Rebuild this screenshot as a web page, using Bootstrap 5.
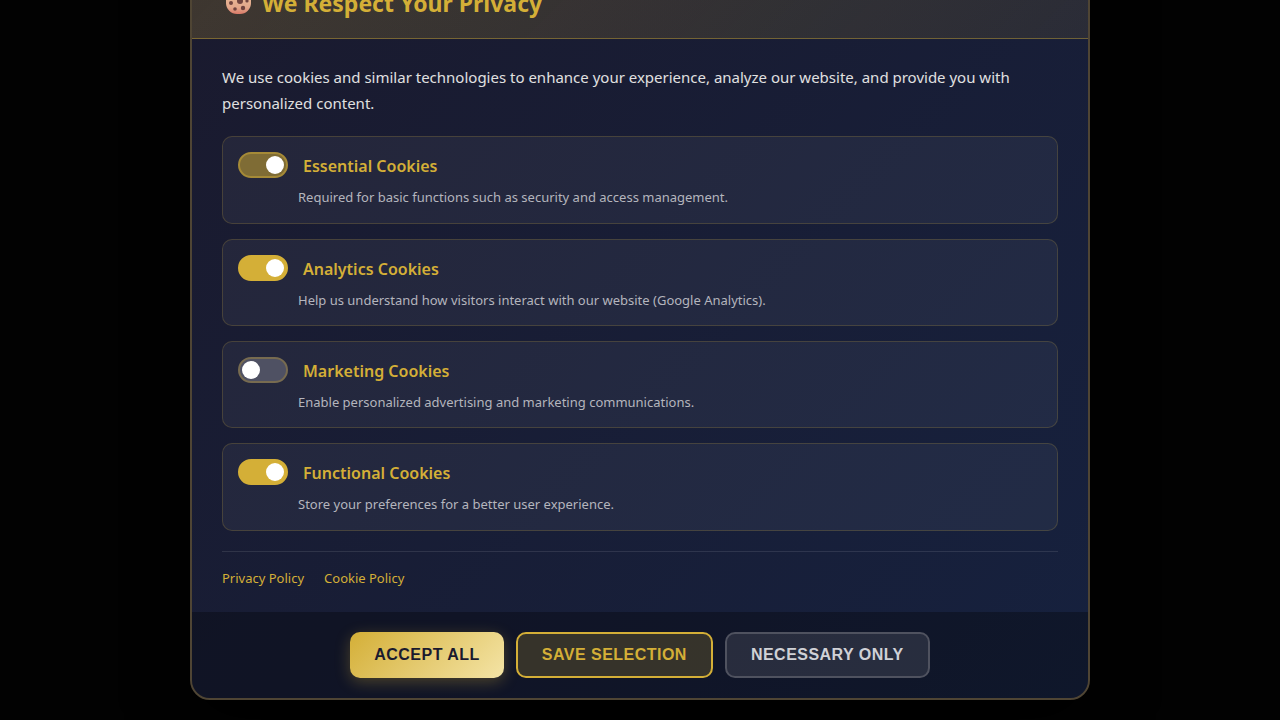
<!DOCTYPE html>
<html lang="en">
<head>
<meta charset="utf-8">
<meta name="viewport" content="width=device-width, initial-scale=1">
<title>Cookie consent</title>
<link href="https://cdn.jsdelivr.net/npm/bootstrap@5.3.0/dist/css/bootstrap.min.css" rel="stylesheet">
<style>
:root { --gold: #d4af37; --gold-rgb: 212,175,55; }
body { background: #020202; color: #e0e0e0; font-family: "Noto Sans", "Open Sans", sans-serif; font-size: 15px; }
.consent-overlay { height: 100vh; padding: 20px; }
.consent-panel { max-width: 900px; border: 2px solid #4f4534; border-radius: 20px;
  background: linear-gradient(135deg, #1a1a2e 0%, #16213e 100%);
  box-shadow: 0 20px 60px #000; }
.consent-head { padding: 25px 30px 21px; border-bottom: 1px solid rgba(var(--gold-rgb),.4);
  border-radius: 18px 18px 0 0;
  background: linear-gradient(135deg, rgba(var(--gold-rgb),.2), rgba(var(--gold-rgb),.1)); }
.consent-title { color: var(--gold); font-size: 23px; font-weight: 700; line-height: 28px; gap: 8px; }
.consent-body { padding: 25px 30px 23px; }
.consent-intro { line-height: 26px; margin-bottom: 20px; }
.consent-list { gap: 15px; }
.consent-item { padding: 15px 15px 14px; border: 1px solid rgba(var(--gold-rgb),.2); border-radius: 10px; background: rgba(255,255,255,.05); }
.consent-row { gap: 15px; padding: 0; }
.consent-row label { color: var(--gold); font-size: 16px; font-weight: 600; line-height: 24px; padding-top: 2px; }
.consent-row .form-check-input { width: 50px; height: 26px; margin: 0; position: relative;
  border: 2px solid #776b50; border-radius: 13px; background: #4f5163; }
.consent-row .form-check-input::after { content: ""; position: absolute; top: 2px; left: 2px; width: 18px; height: 18px; border-radius: 50%; background: #fff; }
.consent-row .form-check-input:checked { background: var(--gold); border-color: var(--gold); }
.consent-row .form-check-input:checked::after { left: auto; right: 2px; }
.consent-row .form-check-input:disabled { opacity: 1; background: #7f6c35; border-color: #a58a37; }
.consent-row .form-check-input:disabled ~ label { opacity: 1; }
.consent-note { color: #b4b5bd; font-size: 13px; line-height: 1.72; margin: 8px 0 0 60px; }
.consent-links { margin-top: 20px; padding-top: 15px; gap: 20px; border-top: 1px solid rgba(255,255,255,.1); font-size: 13px; line-height: 1.72; }
.consent-links a { color: var(--gold); text-decoration: none; }
.consent-foot { padding: 20px 30px; gap: 12px; background: rgba(0,0,0,.3); border-radius: 0 0 18px 18px; }
.consent-foot .btn { padding: 10px 24px; border-width: 2px; border-radius: 10px; font: 700 16px/22px "Liberation Sans", Arial, sans-serif; letter-spacing: .03em; text-transform: uppercase; }
.consent-foot .btn-accept { border: 0; padding: 12px 24px; color: #1a1a2e; background: linear-gradient(135deg, #d4af37, #f4e4a6); box-shadow: 0 4px 15px rgba(var(--gold-rgb),.3); }
.consent-foot .btn-save { color: var(--gold); border-color: var(--gold); background: rgba(var(--gold-rgb),.2); }
.consent-foot .btn-need { color: #d0d1d6; border-color: #4f525f; background: rgba(255,255,255,.1); }
</style>
</head>
<body>
<div class="consent-overlay d-flex align-items-end justify-content-center overflow-hidden">
  <section class="consent-panel w-100" role="dialog" aria-labelledby="consentTitle">
    <header class="consent-head">
      <h2 class="consent-title d-flex align-items-center m-0" id="consentTitle">
        <svg width="32" height="28" viewBox="0 0 32 28" aria-hidden="true">
          <defs><linearGradient id="dough" x1="0" y1="0" x2="0" y2="1"><stop offset=".3" stop-color="#e6b694"/><stop offset=".75" stop-color="#e3a78b"/><stop offset="1" stop-color="#d97867"/></linearGradient></defs>
          <rect x="4" y="0" width="25" height="25" rx="11" fill="url(#dough)"/>
          <g fill="#70443f"><circle cx="18" cy="12" r="3"/><circle cx="9" cy="14" r="2"/><circle cx="25" cy="12" r="1.6"/><circle cx="13" cy="20" r="1.8"/><circle cx="21" cy="19" r="2.2"/><circle cx="12" cy="6" r="2"/><circle cx="21" cy="5" r="2"/></g>
        </svg>
        <span>We Respect Your Privacy</span>
      </h2>
    </header>
    <div class="consent-body">
      <p class="consent-intro">We use cookies and similar technologies to enhance your experience, analyze our website, and provide you with personalized content.</p>
      <div class="consent-list d-flex flex-column">
        <div class="consent-item">
          <div class="consent-row form-switch d-flex align-items-center">
            <input class="form-check-input" type="checkbox" id="essential" checked disabled>
            <label for="essential">Essential Cookies</label>
          </div>
          <p class="consent-note">Required for basic functions such as security and access management.</p>
        </div>
        <div class="consent-item">
          <div class="consent-row form-switch d-flex align-items-center">
            <input class="form-check-input" type="checkbox" id="analytics" checked>
            <label for="analytics">Analytics Cookies</label>
          </div>
          <p class="consent-note">Help us understand how visitors interact with our website (Google Analytics).</p>
        </div>
        <div class="consent-item">
          <div class="consent-row form-switch d-flex align-items-center">
            <input class="form-check-input" type="checkbox" id="marketing">
            <label for="marketing">Marketing Cookies</label>
          </div>
          <p class="consent-note">Enable personalized advertising and marketing communications.</p>
        </div>
        <div class="consent-item">
          <div class="consent-row form-switch d-flex align-items-center">
            <input class="form-check-input" type="checkbox" id="functional" checked>
            <label for="functional">Functional Cookies</label>
          </div>
          <p class="consent-note">Store your preferences for a better user experience.</p>
        </div>
      </div>
      <nav class="consent-links d-flex" aria-label="Policies">
        <a href="#privacy">Privacy Policy</a>
        <a href="#cookies">Cookie Policy</a>
      </nav>
    </div>
    <footer class="consent-foot d-flex flex-wrap justify-content-center">
      <button type="button" class="btn btn-accept">Accept All</button>
      <button type="button" class="btn btn-save">Save Selection</button>
      <button type="button" class="btn btn-need">Necessary Only</button>
    </footer>
  </section>
</div>
<script src="https://cdn.jsdelivr.net/npm/bootstrap@5.3.0/dist/js/bootstrap.bundle.min.js"></script>
</body>
</html>
